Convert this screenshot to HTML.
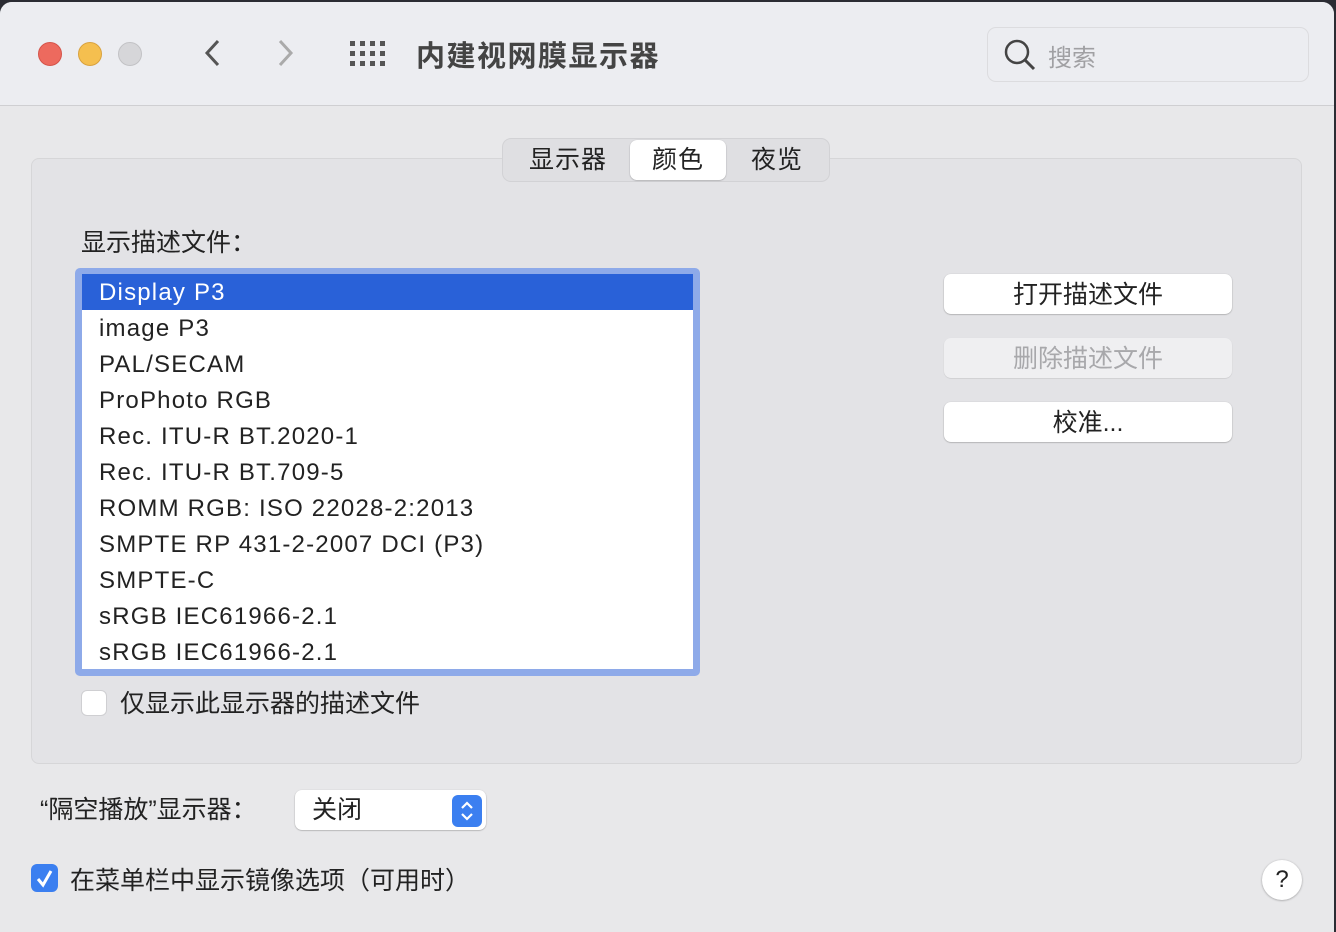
<!DOCTYPE html>
<html><head><meta charset="utf-8"><style>
*{margin:0;padding:0;box-sizing:border-box}
body{width:1336px;height:920px;background:#2b2c33;overflow:hidden;position:relative;font-family:"Liberation Sans","Noto Sans CJK SC",sans-serif;color:#222}
.win{position:absolute;left:0;top:2px;width:1334px;height:930px;background:#e8e8ea;border-radius:12px 12px 0 0;overflow:hidden}
.tb{position:absolute;left:0;top:0;width:100%;height:104px;background:#ecedf1;border-bottom:1px solid #cfcfd2}
.a{position:absolute}
.z{font-size:25px;line-height:1.2}
.dot{position:absolute;top:40px;width:24px;height:24px;border-radius:50%}
.panel{position:absolute;left:31px;top:156px;width:1271px;height:606px;background:#e3e3e6;border:1px solid #d6d6d8;border-radius:8px}
.btn{position:absolute;left:944px;width:288px;height:40px;background:#fff;border-radius:7px;box-shadow:0 0.5px 1.5px rgba(0,0,0,.35);font-size:25px;text-align:center;line-height:42px}
.row{height:36px;line-height:38px;padding-left:17px;font-size:24px;letter-spacing:1.2px;color:#222}
</style></head><body>
<div class="win">
<div class="tb">
<div class="dot" style="left:38px;background:#ed6a5e;border:1px solid #d5544a"></div>
<div class="dot" style="left:78px;background:#f5bf4f;border:1px solid #d9a23e"></div>
<div class="dot" style="left:118px;background:#d6d6d9;border:1px solid #c2c2c5"></div>
<svg class="a" style="left:200px;top:36px" width="24" height="30"><path d="M18 3 L7 15 L18 27" stroke="#555" stroke-width="3" fill="none"/></svg>
<svg class="a" style="left:274px;top:36px" width="24" height="30"><path d="M6 3 L17 15 L6 27" stroke="#aaa" stroke-width="3" fill="none"/></svg>
<svg class="a" style="left:350px;top:39px" width="38" height="26" fill="#555">
<rect x="0" y="0" width="5" height="5"/><rect x="10" y="0" width="5" height="5"/><rect x="20" y="0" width="5" height="5"/><rect x="30" y="0" width="5" height="5"/>
<rect x="0" y="10" width="5" height="5"/><rect x="10" y="10" width="5" height="5"/><rect x="20" y="10" width="5" height="5"/><rect x="30" y="10" width="5" height="5"/>
<rect x="0" y="20" width="5" height="5"/><rect x="10" y="20" width="5" height="5"/><rect x="20" y="20" width="5" height="5"/><rect x="30" y="20" width="5" height="5"/></svg>
<div class="a" style="left:416px;top:31px;font-size:29px;letter-spacing:1.5px;font-weight:bold;color:#444">内建视网膜显示器</div>
<div class="a" style="left:987px;top:25px;width:322px;height:55px;border:1px solid #dcdcdf;border-radius:9px;background:#ecedf1"></div>
<svg class="a" style="left:1003px;top:36px" width="34" height="34"><circle cx="14" cy="14" r="11" stroke="#444" stroke-width="2.5" fill="none"/><path d="M22 22 L31 31" stroke="#444" stroke-width="3"/></svg>
<div class="a" style="left:1048px;top:36px;font-size:24px;color:#a0a0a3">搜索</div>
</div>
<div class="panel"></div>
<div class="a" style="left:502px;top:136px;width:328px;height:44px;background:#dfdfe2;border:1px solid #d2d2d5;border-radius:9px"></div>
<div class="a" style="left:630px;top:138px;width:96px;height:40px;background:#fff;border-radius:7px;box-shadow:0 0.5px 1.5px rgba(0,0,0,.3)"></div>
<div class="a z" style="left:529px;top:143px;letter-spacing:1px">显示器</div>
<div class="a z" style="left:652px;top:143px;letter-spacing:1px">颜色</div>
<div class="a z" style="left:751px;top:143px;letter-spacing:1px">夜览</div>
<div class="a z" style="left:81px;top:226px">显示描述文件：</div>
<div class="a" style="left:75px;top:266px;width:625px;height:408px;background:#8eaae9;border-radius:5px"></div>
<div class="a" style="left:82px;top:272px;width:611px;height:395px;background:#fff;overflow:hidden">
<div class="row" style="background:#2961d8;color:#fff">Display P3</div>
<div class="row">image P3</div>
<div class="row">PAL/SECAM</div>
<div class="row">ProPhoto RGB</div>
<div class="row">Rec. ITU-R BT.2020-1</div>
<div class="row">Rec. ITU-R BT.709-5</div>
<div class="row">ROMM RGB: ISO 22028-2:2013</div>
<div class="row">SMPTE RP 431-2-2007 DCI (P3)</div>
<div class="row">SMPTE-C</div>
<div class="row">sRGB IEC61966-2.1</div>
<div class="row">sRGB IEC61966-2.1</div>
</div>
<div class="a" style="left:81px;top:688px;width:26px;height:26px;background:#fff;border:1px solid #cfcfd2;border-radius:6px"></div>
<div class="a z" style="left:120px;top:687px">仅显示此显示器的描述文件</div>
<div class="btn" style="top:272px">打开描述文件</div>
<div class="btn" style="top:336px;background:#efeff1;color:#a8a8ab;box-shadow:0 0.5px 1px rgba(0,0,0,.15)">删除描述文件</div>
<div class="btn" style="top:400px">校准...</div>
<div class="a z" style="left:40px;top:793px">“隔空播放”显示器：</div>
<div class="a" style="left:295px;top:788px;width:191px;height:40px;background:#fff;border-radius:7px;box-shadow:0 0.5px 1.5px rgba(0,0,0,.35)"></div>
<div class="a z" style="left:312px;top:793px">关闭</div>
<div class="a" style="left:452px;top:793px;width:30px;height:32px;background:#3b7ff0;border-radius:6px"></div>
<svg class="a" style="left:452px;top:793px" width="30" height="32"><path d="M10 13 L15 8 L20 13 M10 19 L15 24 L20 19" stroke="#fff" stroke-width="2.2" fill="none"/></svg>
<div class="a" style="left:31px;top:862px;width:27px;height:28px;background:#3b7ff0;border-radius:6px"></div>
<svg class="a" style="left:31px;top:862px" width="27" height="28"><path d="M7 15 L12 21 L20 7" stroke="#fff" stroke-width="3" fill="none"/></svg>
<div class="a z" style="left:70px;top:864px">在菜单栏中显示镜像选项（可用时）</div>
<div class="a" style="left:1262px;top:858px;width:40px;height:40px;background:#fff;border-radius:50%;box-shadow:0 0.5px 2px rgba(0,0,0,.35);text-align:center;line-height:40px;font-size:24px">?</div>
</div>
</body></html>
